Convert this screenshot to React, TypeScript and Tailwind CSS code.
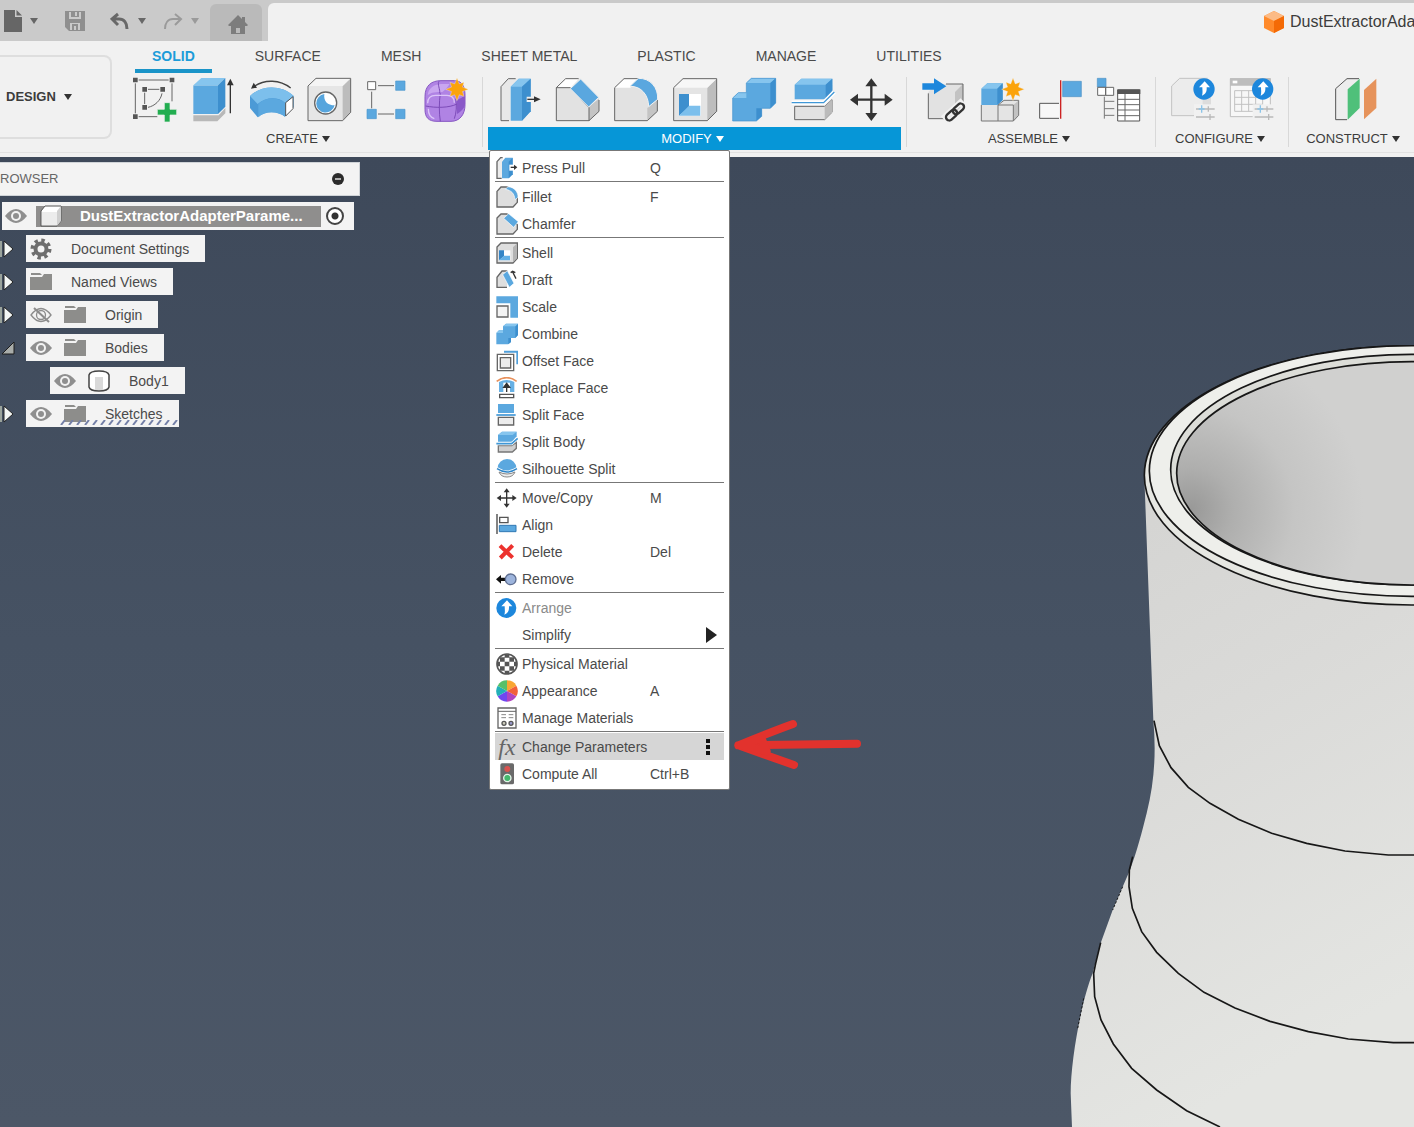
import type { ReactNode } from 'react';

const ICON = 'block h-[46px] w-[46px]';
const SMALL = 'block h-[22px] w-[22px] shrink-0';

function Caret({ className = 'text-[#333]' }: { className?: string }) {
  return (
    <svg viewBox="0 0 8 6" className={`h-[6px] w-[8px] ${className}`} fill="currentColor">
      <path d="M0 0h8L4 6z" />
    </svg>
  );
}

function Burst({ x, y, r = 34 }: { x: number; y: number; r?: number }) {
  const points = Array.from({ length: 16 }, (_, i) => {
    const radius = i % 2 ? r * 0.52 : i % 4 === 0 ? r : r * 0.88;
    const angle = (i * Math.PI) / 8;
    return `${x + radius * Math.sin(angle)},${y - radius * Math.cos(angle)}`;
  }).join(' ');
  return <polygon points={points} fill="#fba30c" stroke="#f3f1ea" strokeWidth="1" />;
}

function UpBadge({ x, y, r = 32 }: { x: number; y: number; r?: number }) {
  return (
    <g transform={`translate(${x} ${y})`}>
      <circle r={r} fill="#1d87dc" />
      <path d="M2-23 18-5H8C9 8 5 16-6 20-3 12-5 4-5-5h-10z" fill="#fff" />
    </g>
  );
}

function Sliders({ x, y }: { x: number; y: number }) {
  return (
    <g transform={`translate(${x} ${y})`} strokeWidth="4" fill="none">
      <path d="M-6-14h72v50H-6z" fill="#f1f1f1" />
      <path d="M0 0h56M0 24h56" stroke="#b9b9b9" />
      <path d="M8 0h18M17-11v22" stroke="#8cc4e8" />
      <path d="M37-8v16M42 15v18" stroke="#b9b9b9" />
    </g>
  );
}

/* toolbar icons */

const createIcons: [string, ReactNode][] = [
  ['Create Sketch', (
    <svg viewBox="396 231 138 138" className={ICON}>
      <g fill="none" stroke="#666" strokeWidth="3">
        <path d="M416 240h90M406 250v90M416 350h56M516 250v54" />
        <path d="M444 268h34M434 278v34M486 280c-4 22-22 38-42 42" />
      </g>
      <path d="M399 233h14v14h-14zM509 233h14v14h-14zM399 343h14v14h-14zM427 261h14v14h-14zM481 261h14v14h-14zM427 315h14v14h-14z" fill="#555" />
      <path d="M493 308h17v20h20v17h-20v21h-17v-21h-21v-17h21z" fill="#22ad50" stroke="#f1f1f1" strokeWidth="2" />
    </svg>
  )],
  ['Extrude', (
    <svg viewBox="570 231 138 138" className={ICON}>
      <path d="M580 346h76l20-22v16l-24 24h-72z" fill="#b8b8b8" />
      <path d="M580 256h74v86h-74z" fill="#5ba8df" />
      <path d="m580 256 24-22h72l-22 22z" fill="#86c5ee" />
      <path d="m654 256 22-22v86l-22 22z" fill="#3d8fce" />
      <path d="M691 340v-92" stroke="#333" strokeWidth="4" />
      <path d="m691 236 10 20h-20z" fill="#333" />
    </svg>
  )],
  ['Revolve', (
    <svg viewBox="744 231 138 138" className={ICON}>
      <path d="M750 288c35-34 95-34 131 0v34l-26 28c-20-16-58-20-82 2l-23-28z" fill="#4c9ad6" />
      <path d="M750 288c35-34 95-34 131 0l-26 20c-20-18-58-18-82 4z" fill="#7cbfec" />
      <path d="M775 312c22-22 58-20 80-4v42c-20-16-58-20-80 2z" fill="#5ba8df" />
      <path d="m857 308 22-18v36l-22 22z" fill="#fff" stroke="#555" strokeWidth="3" />
      <path d="M764 258c30-20 75-20 108 6" fill="none" stroke="#444" strokeWidth="4" />
      <path d="m753 266 8-18 10 15z" fill="#333" />
    </svg>
  )],
  ['Hole', (
    <svg viewBox="921 231 138 138" className={ICON}>
      <path d="m927 258 24-23h104v102l-24 25H927z" fill="#e6e6e6" />
      <path d="m1031 258 24-23v102l-24 25z" fill="#bcbcbc" />
      <path d="m927 258 24-23h104l-24 23z" fill="#f5f5f5" />
      <path d="m927 258 24-23h104v102l-24 25H927z" fill="none" stroke="#666" strokeWidth="3" />
      <circle cx="980" cy="309" r="33" fill="#fff" stroke="#666" strokeWidth="4" />
      <path d="M976 282c-3 22 10 34 31 34a28 28 0 1 1-31-34z" fill="#56a5dd" />
    </svg>
  )],
  ['Rectangular Pattern', (
    <svg viewBox="1092 231 138 138" className={ICON}>
      <path d="M1134 257h48M1115 275v50M1134 342h48" stroke="#666" strokeWidth="3" />
      <path d="M1103 245h24v24h-24z" fill="#fff" stroke="#666" strokeWidth="3" />
      <path d="M1187 243h28v28h-28zM1101 328h28v28h-28zM1187 328h28v28h-28z" fill="#5ba8df" stroke="#4b97cf" strokeWidth="2" />
    </svg>
  )],
  ['Create Form', (
    <svg viewBox="1267 231 138 138" className={ICON}>
      <path d="M1276 290c0-34 20-48 48-48h40c22 0 32 16 32 44v28c0 30-16 50-42 50h-42c-26 0-36-12-36-36z" fill="#b083e4" stroke="#8555c2" strokeWidth="3" />
      <path d="M1284 286c2-20 16-32 40-34h26c-8 12-14 18-22 24-18 0-34 0-44 10z" fill="#c9a6f0" />
      <path d="M1372 300c14-6 20-10 24-18v30c0 10-10 22-24 30z" fill="#8a58c8" />
      <path d="M1278 318c30 6 70 6 94-6M1322 280c-4 26-4 60 0 84M1318 244c-6 8 4 24 2 36M1368 296c4 20 2 44-4 60" fill="none" stroke="#7c4bb8" strokeWidth="3" />
      <path d="M1286 326c0 16 6 26 18 30M1284 310c0-16 8-24 24-24h34c16 0 22 8 22 22" fill="none" stroke="#dcc5f8" strokeWidth="4" />
      <Burst x={1372} y={268} />
    </svg>
  )],
];

const modifyIcons: [string, ReactNode][] = [
  ['Press Pull', (
    <svg viewBox="43 111 138 138" className={ICON}>
      <path d="m61 140 22-24h28L88 140v102H61z" fill="#e8e8e8" />
      <path d="M105 116H83l-22 24v102h24" fill="none" stroke="#666" strokeWidth="3" />
      <path d="m90 140 24-24h36v98l-26 28H90z" fill="#5ba8df" />
      <path d="m90 140 24-24h36l-26 24z" fill="#86c5ee" />
      <path d="m124 140 26-24v98l-26 28z" fill="#3d8fce" />
      <path d="M138 170h20v-8l24 16-24 16v-8h-20z" fill="#f1f1f1" />
      <path d="M140 178h24" stroke="#333" strokeWidth="4" />
      <path d="m160 169 20 9-20 9z" fill="#333" />
    </svg>
  )],
  ['Chamfer', (
    <svg viewBox="226 111 138 138" className={ICON}>
      <path d="m233 143 28-27h46l54 60v38l-30 28h-98z" fill="#e2e2e2" />
      <path d="m233 143 28-27h40l-25 27z" fill="#fff" />
      <path d="m331 200 30-24v38l-30 28z" fill="#c4c4c4" />
      <path d="M300 116h-39l-28 27v99h98l30-28v-34M233 143h42l56 60v39" fill="none" stroke="#666" strokeWidth="3" />
      <path d="m275 146 31-29 54 55-30 29z" fill="#5aa7df" stroke="#f1f1f1" strokeWidth="3" />
    </svg>
  )],
  ['Fillet', (
    <svg viewBox="403 111 138 138" className={ICON}>
      <path d="m408 143 28-27h46l54 64v34l-30 28h-98z" fill="#e2e2e2" />
      <path d="m408 143 28-27h44l-25 27z" fill="#fff" />
      <path d="m506 204 30-24v34l-30 28z" fill="#c4c4c4" />
      <path d="M480 116h-44l-28 27v99h98l30-28v-34" fill="none" stroke="#666" strokeWidth="3" />
      <path d="m454 139 25-24c36-1 60 28 58 63l-27 22c0-34-22-62-56-61z" fill="#5aa7df" stroke="#f1f1f1" strokeWidth="3" />
    </svg>
  )],
  ['Shell', (
    <svg viewBox="578 111 138 138" className={ICON}>
      <path d="m583 143 28-27h101v98l-28 28H583z" fill="#e4e4e4" />
      <path d="m684 143 28-27v98l-28 28z" fill="#bdbdbd" />
      <path d="m583 143 28-27h101l-28 27z" fill="#f7f7f7" />
      <path d="m583 143 28-27h101v98l-28 28H583z" fill="none" stroke="#666" strokeWidth="3" />
      <path d="M599 162h66v65h-66z" fill="#fff" />
      <path d="M599 162h30v40l-30 25z" fill="#3d8fce" />
      <path d="M599 227l30-30h34v30z" fill="#7cbfec" />
    </svg>
  )],
  ['Combine', (
    <svg viewBox="753 111 138 138" className={ICON}>
      <path d="M758 174l17-16h24v-29l15-14h73v74l-16 16h-26v24l-16 14h-71z" fill="#5ba8df" />
      <path d="M799 129l15-14h73l-16 14zM758 174l17-16h24v16z" fill="#86c5ee" />
      <path d="m871 129 16-14v74l-16 16zM829 205h16v24l-16 14z" fill="#3d8fce" />
      <path d="M758 174l17-16h24v-29l15-14h73v74l-16 16h-26v24l-16 14h-71z" fill="none" stroke="#4493cf" strokeWidth="2" />
    </svg>
  )],
  ['Split Body', (
    <svg viewBox="928 111 138 138" className={ICON}>
      <path d="M942 199h90l22-20v38l-22 22h-90z" fill="#e2e2e2" stroke="#666" strokeWidth="3" />
      <path d="m1032 199 22-20v38l-22 22z" fill="#bbb" />
      <path d="M942 134l20-18h93v36l-20 26h-93z" fill="#5ba8df" />
      <path d="M942 134l20-18h93l-20 18z" fill="#86c5ee" />
      <path d="m1035 134 20-18v36l-20 26z" fill="#3d8fce" />
      <path d="M933 188h96l32-32" fill="none" stroke="#fff" strokeWidth="13" />
      <path d="M933 188h96l32-32" fill="none" stroke="#3f97d6" strokeWidth="4" />
    </svg>
  )],
  ['Move/Copy', (
    <svg viewBox="1106 111 138 138" className={ICON}>
      <path d="M1173 130v98M1124 179h98" stroke="#333" strokeWidth="7" />
      <path d="m1173 115 18 24h-36zM1173 243l18-24h-36zM1109 179l24-18v36zM1237 179l-24-18v36z" fill="#333" />
    </svg>
  )],
];

const assembleIcons: [string, ReactNode][] = [
  ['Insert Component', (
    <svg viewBox="63 231 138 138" className={ICON}>
      <path d="m85 276 22-24h82v80l-24 24H85z" fill="#e2e2e2" />
      <path d="m165 276 24-24v80l-24 24z" fill="#c2c2c2" />
      <path d="M138 252h51v60M85 280v76h50" fill="none" stroke="#666" strokeWidth="3" />
      <path d="M67 250h35v-15l37 24-37 24v-14H67z" fill="#1d87dc" />
      <g transform="rotate(-42 165 336)" fill="none">
        <path d="M134 326h62v20h-62z" stroke="#f1f1f1" strokeWidth="18" />
        <rect x="132" y="326" width="38" height="20" rx="10" stroke="#333" strokeWidth="7" />
        <rect x="160" y="326" width="38" height="20" rx="10" stroke="#333" strokeWidth="7" />
      </g>
    </svg>
  )],
  ['New Component', (
    <svg viewBox="237 231 138 138" className={ICON}>
      <path d="M244 315h50l18-14h44v45l-16 17h-96z" fill="#e4e4e4" />
      <path d="m340 315 16-14v45l-16 17z" fill="#c2c2c2" />
      <path d="M244 315v48h96l16-17v-45M294 363v-48l18-14h44M294 315h46v48" fill="none" stroke="#777" strokeWidth="3" />
      <path d="m244 266 18-16h46v50l-16 15h-48z" fill="#5ba8df" />
      <path d="m244 266 18-16h46l-16 16z" fill="#86c5ee" />
      <path d="m292 266 16-16v50l-16 15z" fill="#3d8fce" />
      <Burst x={339} y={268} />
    </svg>
  )],
  ['Joint', (
    <svg viewBox="411 231 138 138" className={ICON}>
      <path d="M477 310h-58v45h58" fill="#f7f7f7" stroke="#555" strokeWidth="3" />
      <path d="M488 244h56v46h-56z" fill="#5ba8df" stroke="#4b8fc4" strokeWidth="2" />
      <path d="M482 241v115" stroke="#cc2222" strokeWidth="4" />
    </svg>
  )],
  ['Bill of Materials', (
    <svg viewBox="588 231 138 138" className={ICON}>
      <path d="M595 235h26v26h-26z" fill="#5ba8df" stroke="#4b8fc4" strokeWidth="2" />
      <path d="M596 262h24v24h-24zM620 262h24v24h-24z" fill="#fff" stroke="#666" strokeWidth="3" />
      <path d="M616 290v66M616 304h30M616 326h30M616 346h30" fill="none" stroke="#777" strokeWidth="3" />
      <path d="M656 270h66v93h-66z" fill="#fff" stroke="#555" strokeWidth="3" />
      <path d="M655 268h69v14h-69z" fill="#555" />
      <path d="M656 298h66M656 314h66M656 330h66M656 347h66M678 282v80" stroke="#666" strokeWidth="3" />
    </svg>
  )],
];

const configureIcons: [string, ReactNode][] = [
  ['Create Configuration', (
    <svg viewBox="810 231 138 138" className={ICON}>
      <path d="m815 258 24-23h84l10 8v80l-24 24h-94z" fill="#ececec" />
      <path d="M923 235h-84l-24 23v89h72" fill="none" stroke="#c2c2c2" strokeWidth="3" />
      <path d="m908 262 25-20v80l-25 25z" fill="#dcdcdc" />
      <Sliders x={888} y={327} />
      <UpBadge x={912} y={267} />
    </svg>
  )],
  ['Configuration Table', (
    <svg viewBox="986 231 138 138" className={ICON}>
      <path d="M990 236h120v114H990z" fill="#f7f7f7" stroke="#bdbdbd" strokeWidth="3" />
      <path d="M989 235h122v22H989z" fill="#bdbdbd" />
      <path d="M997 242h14v8h-14z" fill="#fff" />
      <path d="M1003 272h84v62h-84zM1003 292h84M1003 313h84M1024 272v62M1045 272v62M1066 272v62" fill="none" stroke="#c2c2c2" strokeWidth="3" />
      <Sliders x={1063} y={327} />
      <UpBadge x={1087} y={267} />
    </svg>
  )],
];

const constructIcons: [string, ReactNode][] = [
  ['Offset Plane', (
    <svg viewBox="1297 231 138 138" className={ICON}>
      <path d="m1308 266 34-30h38l-36 30v93h-36z" fill="#ededed" />
      <path d="M1378 236h-36l-34 30v93h34" fill="none" stroke="#555" strokeWidth="3" />
      <path d="m1344 268 36-32v88l-36 35z" fill="#4fc07a" />
      <path d="m1393 270 37-34v88l-37 34z" fill="#e6935b" />
    </svg>
  )],
];

/* modify menu */

type Item = { label: string; keys?: string; icon?: ReactNode; state?: 'disabled' | 'active'; submenu?: boolean };

const menu: Item[][] = [
  [
    { label: 'Press Pull', keys: 'Q', icon: (
      <svg viewBox="32 20 66 66" className={SMALL}>
        <path d="M52 22h-6L35 34v50h14" fill="#ececec" stroke="#666" strokeWidth="4" />
        <path d="m50 34 10-12h22v50L70 84H50z" fill="#5ba8df" />
        <path d="m70 34 12-12v50L70 84z" fill="#3d8fce" />
        <path d="M72 43h22v18H72z" fill="#fff" />
        <path d="M76 51h12" stroke="#333" strokeWidth="4" />
        <path d="m86 43 10 8-10 8z" fill="#333" />
      </svg>
    ) },
  ],
  [
    { label: 'Fillet', keys: 'F', icon: (
      <svg viewBox="32 106 66 66" className={SMALL}>
        <path d="m35 122 12-13h16c24 4 32 16 33 32v14l-13 14H35z" fill="#dedede" stroke="#666" strokeWidth="4" />
        <path d="m60 116 8-8c20 2 30 16 30 32l-9 7c-2-18-10-28-29-31z" fill="#5ba8df" stroke="#fff" strokeWidth="2" />
      </svg>
    ) },
    { label: 'Chamfer', icon: (
      <svg viewBox="32 187 66 66" className={SMALL}>
        <path d="m35 202 12-12h18l31 32v14l-13 14H35z" fill="#dedede" stroke="#666" strokeWidth="4" />
        <path d="m55 203 15-14 29 24-14 17z" fill="#5ba8df" stroke="#fff" strokeWidth="2" />
      </svg>
    ) },
  ],
  [
    { label: 'Shell', icon: (
      <svg viewBox="32 273 66 66" className={SMALL}>
        <path d="m35 288 12-12h49v46l-13 14H35z" fill="#dedede" stroke="#666" strokeWidth="4" />
        <path d="m83 289 11-11v44l-11 12z" fill="#b4b4b4" />
        <path d="M41 298h34v30H41z" fill="#fff" />
        <path d="M41 298h15v18l-15 12z" fill="#3585c6" />
        <path d="m41 328 15-14h18v14z" fill="#63b0e6" />
      </svg>
    ) },
    { label: 'Draft', icon: (
      <svg viewBox="32 355 66 66" className={SMALL}>
        <path d="M66 361H50L35 380v30h30" fill="#dedede" stroke="#666" strokeWidth="4" />
        <path d="m52 372 14-12 20 38-14 12z" fill="#5ba8df" stroke="#fff" strokeWidth="2" />
        <path d="M92 384 82 364M76 366l6-4 8 4" fill="none" stroke="#333" strokeWidth="4" />
      </svg>
    ) },
    { label: 'Scale', icon: (
      <svg viewBox="32 436 66 66" className={SMALL}>
        <path d="M33 437h65v64H75V458H33z" fill="#5ba8df" />
        <path d="M35 466h33v33H35z" fill="#f4f4f4" stroke="#666" strokeWidth="4" />
      </svg>
    ) },
    { label: 'Combine', icon: (
      <svg viewBox="32 518 66 66" className={SMALL}>
        <path d="m33 548 8-8h12v-12l9-8h36v34l-8 9H77v12l-9 7H33z" fill="#5ba8df" />
        <path d="m90 528 8-8v34l-8 9zM69 563h8v12l-8 7z" fill="#3d8fce" />
        <path d="m53 528 9-8h36l-8 8zM33 548l8-8h12v8z" fill="#86c5ee" />
      </svg>
    ) },
    { label: 'Offset Face', icon: (
      <svg viewBox="32 599 66 66" className={SMALL}>
        <path d="M56 604h40v38" fill="none" stroke="#4f9fda" strokeWidth="6" />
        <path d="M36 612h49v49H36z" fill="#fff" stroke="#666" strokeWidth="4" />
        <path d="M45 622h31v31H45z" fill="#ececec" stroke="#666" strokeWidth="4" />
      </svg>
    ) },
    { label: 'Replace Face', icon: (
      <svg viewBox="32 21 66 66" className={SMALL}>
        <path d="M41 36q23-12 46 0v30H41z" fill="#67b0e4" />
        <path d="M34 34q30-22 60 0" fill="none" stroke="#e8915c" strokeWidth="5" />
        <path d="M54 38h20v29H54z" fill="#fff" />
        <path d="M64 66V46M55 52l9-12 9 12z" fill="#333" stroke="#333" strokeWidth="4" />
        <path d="M43 73h42v10H43z" fill="#fff" stroke="#555" strokeWidth="4" />
      </svg>
    ) },
    { label: 'Split Face', icon: (
      <svg viewBox="32 103 66 66" className={SMALL}>
        <path d="M38 103h48v27H38z" fill="#5ba8df" />
        <path d="M39 143h46v23H39z" fill="#ececec" stroke="#666" strokeWidth="4" />
        <path d="M33 136h58" stroke="#3f97d6" strokeWidth="5" />
      </svg>
    ) },
    { label: 'Split Body', icon: (
      <svg viewBox="32 184 66 66" className={SMALL}>
        <path d="M39 228h40l14-10v18l-12 11H39z" fill="#cfcfcf" stroke="#777" strokeWidth="4" />
        <path d="m38 196 12-10h44v14l-14 16H38z" fill="#5ba8df" />
        <path d="m38 196 12-10h44l-12 10z" fill="#86c5ee" />
        <path d="M33 222h46l18-16" fill="none" stroke="#fff" strokeWidth="9" />
        <path d="M33 222h46l18-16" fill="none" stroke="#3f97d6" strokeWidth="5" />
      </svg>
    ) },
    { label: 'Silhouette Split', icon: (
      <svg viewBox="32 266 66 66" className={SMALL}>
        <path d="M41 308q24 12 48 0-6 15-24 15t-24-15z" fill="#eee" stroke="#888" strokeWidth="3" />
        <path d="M37 296a28 27 0 0 1 56 0q-28 22-56 0z" fill="#5ba8df" />
        <path d="M35 297q30 20 60 0" fill="none" stroke="#fff" strokeWidth="7" />
        <path d="M35 298q30 20 60 0" fill="none" stroke="#2f86c8" strokeWidth="4" />
      </svg>
    ) },
  ],
  [
    { label: 'Move/Copy', keys: 'M', icon: (
      <svg viewBox="32 349 66 66" className={SMALL}>
        <path d="M64 360v44M42 382h44" stroke="#333" strokeWidth="4" />
        <path d="m64 353 9 12H55zM64 411l9-12H55zM34 382l13-9v18zM94 382l-13-9v18z" fill="#333" />
      </svg>
    ) },
    { label: 'Align', icon: (
      <svg viewBox="32 432 66 66" className={SMALL}>
        <path d="M35 432v60" stroke="#444" strokeWidth="4" />
        <path d="M43 442h25v16H43z" fill="#fff" stroke="#555" strokeWidth="4" />
        <path d="M42 466h50v19H42z" fill="#5ba8df" stroke="#2f78b3" strokeWidth="3" />
      </svg>
    ) },
    { label: 'Delete', keys: 'Del', icon: (
      <svg viewBox="32 513 66 66" className={SMALL}>
        <path d="m44 527 38 36M82 526 45 564" stroke="#ec322e" strokeWidth="12" />
      </svg>
    ) },
    { label: 'Remove', icon: (
      <svg viewBox="32 596 66 66" className={SMALL}>
        <path d="m32 630 15-13v8h12v10H47v8z" fill="#111" />
        <circle cx="76" cy="630" r="16" fill="#9db4dc" stroke="#5f6f92" strokeWidth="4" />
      </svg>
    ) },
  ],
  [
    { label: 'Arrange', state: 'disabled', icon: (
      <svg viewBox="32 20 66 66" className={SMALL}><UpBadge x={63} y={53} r={30} /></svg>
    ) },
    { label: 'Simplify', submenu: true },
  ],
  [
    { label: 'Physical Material', icon: (
      <svg viewBox="32 188 66 66" className={SMALL}>
        <circle cx="65" cy="221" r="30" fill="#fff" stroke="#555" strokeWidth="5" />
        <path d="M58 192h14v10H58zM58 214h14v14H58zM44 201h14v13H44zM72 201h14v13H72zM44 228h14v13H44zM72 228h14v13H72zM58 241h14v10H58zM35 214h9v14h-9zM86 214h9v14h-9z" fill="#555" />
      </svg>
    ) },
    { label: 'Appearance', keys: 'A', icon: (
      <svg viewBox="32 269 66 66" className={SMALL}>
        <path d="M65 302V270a32 32 0 0 1 28 16z" fill="#f9a733" />
        <path d="M65 302l28-16a32 32 0 0 1 0 32z" fill="#f2603a" />
        <path d="M65 302l28 16a32 32 0 0 1-28 16z" fill="#b043c0" />
        <path d="M65 302v32a32 32 0 0 1-28-16z" fill="#6f47f0" />
        <path d="M65 302l-28 16a32 32 0 0 1 0-32z" fill="#22b0b8" />
        <path d="M65 302 37 286a32 32 0 0 1 28-16z" fill="#58c069" />
      </svg>
    ) },
    { label: 'Manage Materials', icon: (
      <svg viewBox="32 351 66 66" className={SMALL}>
        <path d="M38 354h54v60H38z" fill="#fff" stroke="#666" strokeWidth="4" />
        <path d="M38 364h54" stroke="#666" strokeWidth="3" />
        <path d="M48 374h14M70 374h14M48 383h14M70 383h14" stroke="#888" strokeWidth="3" />
        <circle cx="56" cy="400" r="6" fill="#ccb" stroke="#555" strokeWidth="4" />
        <circle cx="77" cy="400" r="6" fill="#99c" stroke="#555" strokeWidth="4" />
      </svg>
    ) },
  ],
  [
    { label: 'Change Parameters', state: 'active', icon: (
      <span className="w-[22px] shrink-0 text-center font-['Liberation_Serif',serif] text-[24px] leading-[22px] text-[#666] italic">fx</span>
    ) },
    { label: 'Compute All', keys: 'Ctrl+B', icon: (
      <svg viewBox="32 518 66 66" className={SMALL}>
        <rect x="45" y="519" width="41" height="63" rx="5" fill="#6a6a6a" />
        <circle cx="66" cy="536" r="9" fill="#d9524f" />
        <circle cx="66" cy="563" r="11" fill="#45b86c" stroke="#e4f3e8" strokeWidth="4" />
      </svg>
    ) },
  ],
];

function MenuRow({ item }: { item: Item }) {
  const tone = item.state === 'disabled' ? 'text-[#8a8a8a]' : 'text-[#4a4a4a]';
  return (
    <button
      role="menuitem"
      disabled={item.state === 'disabled'}
      className={`flex h-[27px] w-full items-center gap-1 pl-px text-left text-sm ${tone} ${item.state === 'active' ? 'bg-[#d6d6d6]' : ''}`}
    >
      {item.icon ?? <span className="w-[22px]" />}
      <span className="min-w-[124px] whitespace-nowrap">{item.label}</span>
      {item.keys && <span>{item.keys}</span>}
      {item.submenu && (
        <svg viewBox="0 0 11 16" className="mr-[7px] ml-auto h-4 w-[11px]" fill="#222"><path d="M0 0l11 8-11 8z" /></svg>
      )}
      {item.state === 'active' && (
        <svg viewBox="0 0 4 16" className="mr-[14px] ml-auto h-4 w-1" fill="#111"><path d="M0 0h4v4H0zM0 6h4v4H0zM0 12h4v4H0z" /></svg>
      )}
    </button>
  );
}

function ModifyMenu() {
  return (
    <div role="menu" className="absolute top-full left-px w-[241px] rounded-xs border border-[#777] bg-white px-[5px] pt-[3px] pb-0.5">
      {menu.map((group, i) => (
        <div key={i} className={i ? 'border-t border-[#777] pt-px' : ''}>
          {group.map((item) => <MenuRow key={item.label} item={item} />)}
        </div>
      ))}
    </div>
  );
}

function Group({ label, icons, className, open = false }: {
  label: string; icons: [string, ReactNode][]; className: string; open?: boolean;
}) {
  return (
    <div className={`relative shrink-0 ${className}`}>
      <div className="flex h-[46px]">
        {icons.map(([name, icon]) => (
          <button key={name} aria-label={name} className="flex flex-1 justify-center">{icon}</button>
        ))}
      </div>
      <button
        aria-expanded={open}
        className={`mt-1 flex h-[23px] w-full items-center justify-center gap-1 pr-1 text-[13px] ${open ? 'bg-[#0696d7] text-white' : 'text-[#3c3c3c]'}`}
      >
        {label}
        <Caret className={open ? 'text-white' : 'text-[#333]'} />
      </button>
      {open && <ModifyMenu />}
    </div>
  );
}

function Divider({ className }: { className: string }) {
  return <div className={`h-[70px] w-px shrink-0 bg-[#d8d8d8] ${className}`} />;
}

function TitleBar() {
  return (
    <div className="flex h-[41px] bg-[#cacaca]">
      <div className="flex w-[210px] shrink-0 items-center pl-1">
        <button aria-label="File" className="flex items-center gap-2">
          <svg viewBox="0 0 18 22" className="h-[22px] w-[18px]" fill="#666"><path d="M0 0h11v7h7v15H0z" /><path d="M12.500 0 18 5.500h-5.500z" /></svg>
          <Caret className="text-[#666]" />
        </button>
        <button aria-label="Save" className="ml-[27px]">
          <svg viewBox="0 0 20 20" className="h-5 w-5" fill="#8f8f8f"><path fillRule="evenodd" d="M0 0h20v20H4l-4-4zM4 1v7h12V1zM5 12v7h10v-7z" /><path d="M6 1h8v5H6zM7 13h6v6H7z" /><path d="M10 1h2v4h-2zM9 15h2v4H9z" fill="#cacaca" /></svg>
        </button>
        <button aria-label="Undo" className="ml-[25px] flex items-center gap-2">
          <svg viewBox="0 0 20 18" className="h-[18px] w-5" fill="none" stroke="#686868" strokeWidth="3"><path d="M8 2 2 7l6 6M2.500 7H9c5 0 8 4 8 10" /></svg>
          <Caret className="text-[#686868]" />
        </button>
        <button aria-label="Redo" className="ml-[17px] flex items-center gap-2">
          <svg viewBox="0 0 20 18" className="h-[18px] w-5" fill="none" stroke="#9a9a9a" strokeWidth="2"><path d="m12 2 6 5-6 6M17 7h-7c-5 0-8 4-8 10" /></svg>
          <Caret className="text-[#9a9a9a]" />
        </button>
      </div>
      <button aria-label="Home" className="mt-1 flex w-[52px] shrink-0 items-center justify-center rounded-t-md bg-[#bababa] pt-1 pl-1">
        <svg viewBox="0 0 20 19" className="h-[19px] w-5" fill="#7d7d7d"><path fillRule="evenodd" d="m10 0 4 4V2h3v5l3 3-1 1h-2v8H3v-8H1l-1-1zM8 13v5h4v-5z" /></svg>
      </button>
      <div className="mt-[3px] ml-1.5 flex min-w-0 flex-1 items-center justify-end rounded-tl-md bg-[#f1f1f1]">
        <div className="flex w-[150px] items-center gap-1.5 overflow-hidden whitespace-nowrap text-[#3c3c3c]">
          <svg viewBox="0 0 20 22" className="h-[22px] w-5 shrink-0">
            <path d="m10 0 10 5v12l-10 5L0 17V5z" fill="#ff8a2b" />
            <path d="m10 0 10 5-10 5L0 5z" fill="#fcbb86" />
            <path d="m20 5v12l-10 5V10z" fill="#f46a06" />
          </svg>
          DustExtractorAda
        </div>
      </div>
    </div>
  );
}

const tabs = ['SOLID', 'SURFACE', 'MESH', 'SHEET METAL', 'PLASTIC', 'MANAGE', 'UTILITIES'];

function Ribbon() {
  return (
    <div className="relative z-10 border-b-4 border-[#f1f1f1] bg-[#f1f1f1]">
      <div className="flex border-b border-[#e2e2e2] pb-0.5">
        <button className="mt-[14px] flex h-[84px] w-[112px] shrink-0 items-center gap-2 rounded-r-lg border-2 border-l-0 border-[#dedede] pl-1.5 text-[13px] font-bold text-[#3c3c3c]">
          DESIGN
          <Caret />
        </button>
        <div className="min-w-0 flex-1">
          <nav className="flex gap-[26px] pl-[23px]">
            {tabs.map((tab, i) => (
              <button
                key={tab}
                className={`h-8 border-b-4 px-[17px] pt-0.5 text-sm whitespace-nowrap ${i === 0 ? 'border-[#1a94c8] font-bold text-[#1c9cd9]' : 'border-transparent text-[#4a4a4a]'}`}
              >
                {tab}
              </button>
            ))}
          </nav>
          <div className="mt-1 flex pl-[14px]">
            <Group label="CREATE" icons={createIcons} className="w-[348px]" />
            <Divider className="ml-2" />
            <Group label="MODIFY" icons={modifyIcons} className="ml-[5px] w-[413px]" open />
            <Divider className="ml-[5px]" />
            <Group label="ASSEMBLE" icons={assembleIcons} className="ml-2 w-[232px]" />
            <Divider className="ml-2" />
            <Group label="CONFIGURE" icons={configureIcons} className="ml-[7px] w-[118px]" />
            <Divider className="ml-[7px]" />
            <Group label="CONSTRUCT" icons={constructIcons} className="ml-[7px] w-[118px]" />
          </div>
        </div>
      </div>
    </div>
  );
}

/* browser tree */

const Eye = ({ off = false }: { off?: boolean }) => (
  <svg viewBox="0 0 22 22" className={SMALL}>
    {off ? (
      <g fill="none" stroke="#8c8c8c" strokeWidth="1.300">
        <path d="M1 11q10-13 20 0-10 13-20 0z" />
        <circle cx="11" cy="11" r="4.500" />
        <path d="m4 4 15 14" strokeWidth="2" />
      </g>
    ) : (
      <>
        <path d="M0 11q11-14 22 0-11 14-22 0z" fill="#8f8f8f" />
        <circle cx="11" cy="11" r="5" fill="#f3f3f3" />
        <circle cx="11" cy="11" r="3" fill="#8f8f8f" />
      </>
    )}
  </svg>
);

const Folder = () => (
  <svg viewBox="0 0 22 22" className={SMALL} fill="#8d8d8b">
    <path d="M1 2h9l2 2H1z" />
    <path d="M0 6h12l2-3h8v16H0z" />
  </svg>
);

const Gear = () => (
  <svg viewBox="0 0 22 22" className={SMALL} fill="none" stroke="#6e6e6e">
    <circle cx="11" cy="11" r="5.500" strokeWidth="4" />
    <circle cx="11" cy="11" r="8.500" strokeWidth="4" strokeDasharray="3.340 3.340" />
  </svg>
);

const Cube = () => (
  <svg viewBox="0 0 22 22" className={SMALL}>
    <path d="m1 6 4-5h16v15l-4 5H1z" fill="#fff" stroke="#555" strokeWidth="1" />
    <path d="M17 6l4-5v15l-4 5z" fill="#cfcfcf" />
    <path d="M2 7h15v13H2z" fill="#ececec" />
  </svg>
);

const Body = () => (
  <svg viewBox="0 0 22 22" className={SMALL}>
    <path d="M1 5q1-4 10-4t10 4v12q-1 4-10 4T1 17z" fill="#fff" stroke="#444" strokeWidth="1.500" />
    <path d="M7 7h8v13H7z" fill="#d9d9d9" />
  </svg>
);

type Node = { label: string; icons: ReactNode; toggle?: 'closed' | 'open'; sketch?: boolean };

const nodes: Node[] = [
  { label: 'Document Settings', icons: <Gear />, toggle: 'closed' },
  { label: 'Named Views', icons: <Folder />, toggle: 'closed' },
  { label: 'Origin', icons: <><Eye off /><Folder /></>, toggle: 'closed' },
  { label: 'Bodies', icons: <><Eye /><Folder /></>, toggle: 'open' },
  { label: 'Body1', icons: <><Eye /><Body /></> },
  { label: 'Sketches', icons: <><Eye /><Folder /></>, toggle: 'closed', sketch: true },
];

function TreeRow({ node }: { node: Node }) {
  return (
    <li className="flex h-[27px] items-center">
      {node.toggle ? (
        <button aria-label={`Toggle ${node.label}`} className="w-[26px] shrink-0">
          {node.toggle === 'closed' ? (
            <svg viewBox="0 0 14 18" className="h-[18px] w-[14px]"><path d="M0 1h2v16H0z" fill="#9aa39c" /><path d="M4 1l9 8-9 8z" fill="#f4f7f5" stroke="#222" strokeWidth="1" /></svg>
          ) : (
            <svg viewBox="0 0 16 18" className="h-[18px] w-4"><path d="M14 3v12H2z" fill="#a9adaa" stroke="#1d1d1d" strokeWidth="1" /></svg>
          )}
        </button>
      ) : <span className="w-[50px]" />}
      <div className="relative flex h-full items-center bg-[#f3f3f3] pr-4 pl-1 text-sm text-[#4a4a4a]">
        <span className="mr-[19px] flex gap-3">{node.icons}</span>
        {node.label}
        {node.sketch && (
          <svg className="absolute bottom-0.5 left-[34px] h-[5px] w-[120px]" viewBox="0 0 120 5">
            <path d={Array.from({ length: 15 }, (_, i) => `M${i * 8 + 1} 5l4-5`).join('')} stroke="#7480a8" strokeWidth="2" />
          </svg>
        )}
      </div>
    </li>
  );
}

function Browser() {
  return (
    <aside className="relative w-[360px] pt-[5px]">
      <div className="flex h-[34px] items-center justify-between border border-l-0 border-[#d0d4d8] bg-[#f3f3f3] pr-[15px] text-[13px] text-[#666]">
        <span>ROWSER</span>
        <button aria-label="Collapse browser">
          <svg viewBox="0 0 12 12" className="h-3 w-3"><circle cx="6" cy="6" r="6" fill="#2b2b2b" /><path d="M3 6h6" stroke="#ddd" strokeWidth="1.500" /></svg>
        </button>
      </div>
      <div className="mt-1.5 mr-1.5 ml-0.5 flex h-7 items-center bg-[#f3f3f3] pl-[3px]">
        <Eye />
        <div className="ml-[9px] flex h-[21px] w-[285px] items-center bg-[#8f8e8d] pl-1 text-[15px] font-bold text-white">
          <Cube />
          <span className="ml-[18px]">DustExtractorAdapterParame...</span>
        </div>
        <input
          type="radio"
          aria-label="Activate component"
          defaultChecked
          className="m-0 ml-[5px] h-[18px] w-[18px] appearance-none rounded-full border-2 border-[#444] bg-[radial-gradient(circle,#333_3px,#fff_4px)]"
        />
      </div>
      <ul className="mt-[5px] flex flex-col gap-1.5">
        {nodes.map((node) => <TreeRow key={node.label} node={node} />)}
      </ul>
    </aside>
  );
}

function Model() {
  return (
    <svg viewBox="60 45 1032 2346" className="absolute right-0 bottom-0 h-[782px] w-[344px]">
      <defs>
        <linearGradient id="shell" x1="0" y1="0" x2="0.300" y2="1">
          <stop offset="0" stopColor="#d3d3d1" />
          <stop offset="0.450" stopColor="#dadad8" />
          <stop offset="1" stopColor="#e4e5e2" />
        </linearGradient>
        <radialGradient id="bore" gradientUnits="userSpaceOnUse" cx="420" cy="540" r="520">
          <stop offset="0" stopColor="#989897" />
          <stop offset="0.250" stopColor="#afafae" />
          <stop offset="0.600" stopColor="#c5c5c4" />
          <stop offset="1" stopColor="#d0d0cf" />
        </radialGradient>
      </defs>
      <path
        d="M283 440 310 1170C318 1260 315 1350 290 1450C275 1510 262 1560 240 1620L190 1735 150 1845 128 1930C95 2010 62 2190 62 2290L66 2391H1092V436z"
        fill="url(#shell)"
      />
      <g stroke="#171717" strokeWidth="5">
        <ellipse cx="1085" cy="436" rx="802" ry="389" fill="#e6e7e2" />
        <ellipse cx="1085" cy="423" rx="787" ry="376" fill="#eeefeb" />
        <ellipse cx="1085" cy="419" rx="723" ry="346" fill="#dcddd8" />
        <ellipse cx="1085" cy="430" rx="705" ry="335" fill="url(#bore)" />
      </g>
      <g transform="translate(0 1110)" fill="none" stroke="#171717" strokeWidth="5">
        <polyline points="312,62 328,137 363,203 415,262 480,310 565,358 665,400 770,430 885,453 1015,465 1092,465" />
        <polyline points="248,470 238,510 237,560 247,625 275,695 320,757 385,820 462,877 555,924 660,964 775,995 895,1017 1030,1028 1092,1028" />
        <polyline points="152,728 137,790 131,820 134,890 153,960 190,1032 245,1105 320,1170 410,1232 510,1281" />
        <path d="M218 560 188 630M101 895 83 985" strokeWidth="3" strokeDasharray="7 5" />
      </g>
    </svg>
  );
}

export default function App() {
  return (
    <div className="flex min-h-screen flex-col overflow-hidden font-['Liberation_Sans',Arial,sans-serif]">
      <TitleBar />
      <Ribbon />
      <main className="relative flex-1 bg-linear-to-b from-[#3e495a] via-[#465263] to-[#4c5767]">
        <Model />
        <Browser />
        <svg viewBox="747 393 384 144" className="absolute top-[564px] left-[734px] h-12 w-32 overflow-visible" fill="none" stroke="#e2322d" strokeWidth="24" strokeLinecap="round" strokeLinejoin="round">
          <path d="M1116 461 760 466M924 402Q860 425 760 466L927 525" />
          <path d="M764 465 830 446 845 484z" fill="#e2322d" />
        </svg>
      </main>
    </div>
  );
}
